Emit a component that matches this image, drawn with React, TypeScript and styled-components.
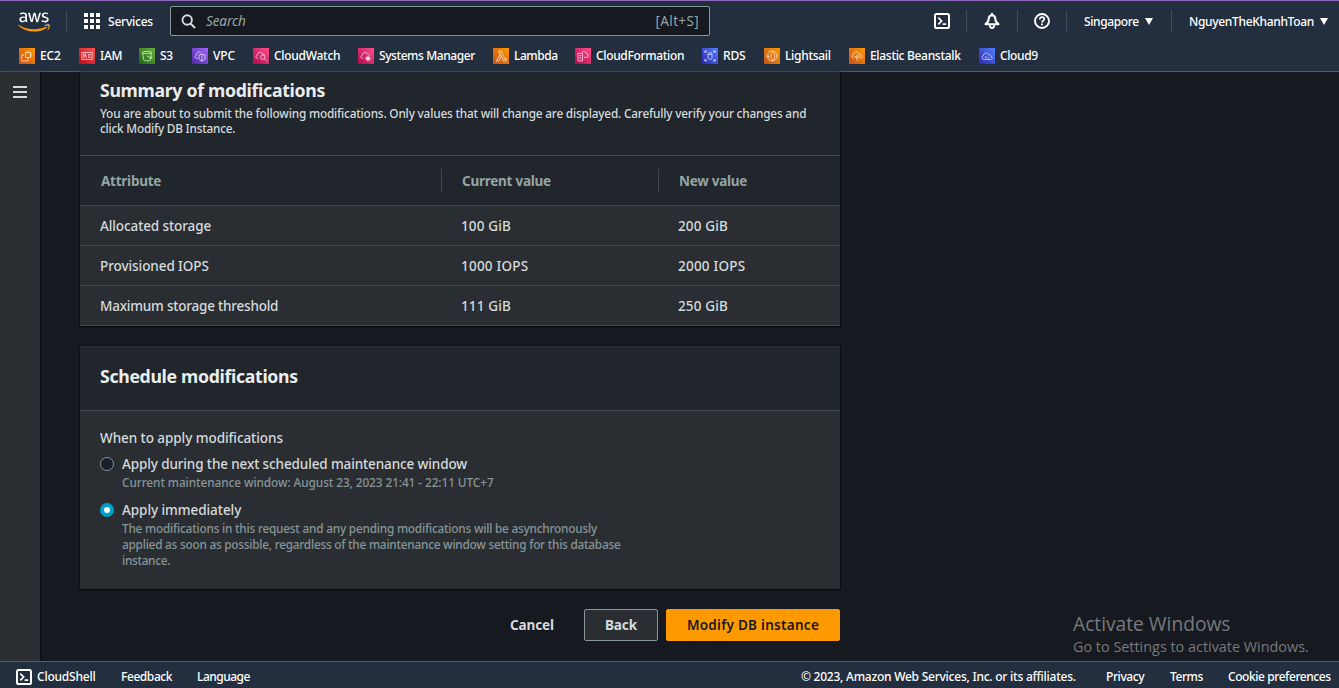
import React from 'react';
import styled, { createGlobalStyle } from 'styled-components';
import { FaAws } from 'react-icons/fa';

const GlobalStyle = createGlobalStyle`
  *, *::before, *::after { box-sizing: border-box; }
  body {
    margin: 0;
    background: #16191f;
    color: #d5dbdb;
    font-family: "Noto Sans", "Open Sans", sans-serif;
    font-size: 13.5px;
    font-weight: 500;
  }
  h2, p { margin: 0; }
`;

const Page = styled.div`
  position: relative;
  display: flex;
  flex-direction: column;
  height: 688px;
  overflow: hidden;
`;

/* ---------- header ---------- */

const Header = styled.header`
  flex: none;
  height: 72px;
  background: #232f3e;
  border-top: 1px solid #9069bd;
  border-bottom: 1px solid #545b64;
  color: #fff;
  font-size: 12px;
`;

const TopRow = styled.div`
  display: flex;
  align-items: center;
  height: 40px;
`;

const Logo = styled.span`
  display: flex;
  width: 48px;
  padding: 1px 0 0 18px;
  margin-right: 18px;
`;

const LogoMark = styled(FaAws)`
  flex: none;
  width: 32px;
  height: 26px;
  path { fill: url(#awsFill); }
`;

const GradientDefs = styled.svg`
  position: absolute;
  width: 0;
  height: 0;
`;

const Separator = styled.span`
  flex: none;
  width: 1px;
  height: 22px;
  background: #414d5c;
`;

const ServicesButton = styled.div`
  display: flex;
  align-items: center;
  gap: 8px;
  width: 103px;
  padding-left: 17px;
`;

const Text = styled.span<{ $track?: number }>`
  white-space: nowrap;
  letter-spacing: ${(p) => p.$track ?? 0}px;
`;

const IconLabel = styled(Text)`
  margin-top: -2px;
`;

const SearchBox = styled.div`
  display: flex;
  align-items: center;
  width: 540px;
  height: 30px;
  padding: 0 10px 0 10px;
  background: #16191f;
  border: 1px solid #879596;
  border-radius: 2px;
  color: #95a5a6;
  font-size: 13.5px;
  font-weight: 400;
`;

const Placeholder = styled(Text)`
  flex: 1;
  margin-left: 10px;
  font-style: italic;
`;

const Tools = styled.div`
  display: flex;
  align-items: center;
  margin-left: auto;
`;

const Tool = styled.div<{ $width: number }>`
  display: flex;
  align-items: center;
  justify-content: center;
  width: ${(p) => p.$width}px;
`;

const MenuTool = styled.div<{ $width: number; $end: number }>`
  display: flex;
  align-items: center;
  justify-content: space-between;
  width: ${(p) => p.$width}px;
  margin: 0 ${(p) => p.$end}px 0 17px;
`;

const Favorites = styled.nav`
  display: flex;
  height: 30px;
  padding: 7px 0 0 19px;
`;

const Favorite = styled.a<{ $width: number }>`
  display: flex;
  align-items: center;
  gap: 5px;
  width: ${(p) => p.$width}px;
  height: 16px;
  line-height: 15px;
`;

const Tile = styled.svg<{ $from: string; $to: string }>`
  flex: none;
  width: 16px;
  height: 16px;
  padding: 2px;
  background: linear-gradient(45deg, ${(p) => p.$from}, ${(p) => p.$to});
  fill: none;
  stroke: #fff;
  stroke-opacity: 0.8;
  stroke-width: 0.8;
`;

/* ---------- body ---------- */

const Body = styled.div`
  flex: 1;
  display: flex;
  min-height: 0;
`;

const Rail = styled.aside`
  display: flex;
  align-items: flex-start;
  width: 40px;
  padding: 14px 0 0 13px;
  background: #2a2e33;
  box-shadow: 1px 0 1px #0c0e12;
`;

const Content = styled.main`
  width: 760px;
  margin-left: 40px;
`;

const Card = styled.section`
  background: #2a2e33;
  box-shadow: 0 1px 1px #06080b, 1px 0 1px #0b0d11, -1px 0 1px #0f1216;
`;

const SummaryHead = styled.div`
  height: 84px;
  padding: 5px 20px 0;
  background: #21252c;
  border-bottom: 1px solid #414750;
`;

const Title = styled.h2<{ $track: number }>`
  font-size: 17.7px;
  line-height: 26px;
  font-weight: 700;
  color: #eaeded;
  letter-spacing: ${(p) => p.$track}px;
`;

const Intro = styled.p`
  margin-top: 3px;
  font-size: 11.8px;
  line-height: 15px;
`;

const Line = styled.span<{ $track: number }>`
  display: block;
  white-space: nowrap;
  letter-spacing: ${(p) => p.$track}px;
`;

const TableRow = styled.div`
  display: grid;
  grid-template-columns: 361px 217px 182px;
  align-items: center;
  height: 40px;
  border-bottom: 1px solid #414750;
`;

const TableHead = styled(TableRow)`
  height: 50px;
  background: #21252c;
  color: #95a5a6;
  font-weight: 700;
`;

const Cell = styled.span<{ $track: number }>`
  padding-left: 20px;
  white-space: nowrap;
  letter-spacing: ${(p) => p.$track}px;
`;

const HeadCell = styled(Cell)`
  height: 24px;
  line-height: 24px;
  border-left: 1px solid #414750;
  &:first-child { border-color: transparent; }
`;

const ScheduleCard = styled(Card)`
  height: 243px;
  margin-top: 20px;
  border-top: 1px solid #2b3036;
`;

const ScheduleHead = styled.div`
  height: 64px;
  padding: 16px 20px 0;
  background: #21252c;
  border-bottom: 1px solid #414d56;
`;

const Form = styled.div`
  padding: 17px 20px 0;
  line-height: 20px;
`;

const Option = styled.label<{ $top: number }>`
  display: grid;
  grid-template-columns: 14px 1fr;
  column-gap: 8px;
  margin-top: ${(p) => p.$top}px;
`;

const Radio = styled.span<{ $checked?: boolean }>`
  width: 14px;
  height: 14px;
  margin-top: 3px;
  border-radius: 50%;
  background: ${(p) => (p.$checked ? '#fff' : '#16202b')};
  border: ${(p) => (p.$checked ? '4px solid #00a1c9' : '1px solid #879596')};
`;

const Hint = styled.div`
  color: #879596;
  font-size: 11.8px;
  line-height: 16px;
`;

const Actions = styled.div`
  display: flex;
  justify-content: flex-end;
  gap: 8px;
  margin-top: 20px;
`;

const Button = styled.button<{ $kind: 'link' | 'normal' | 'primary'; $track: number; $width: number }>`
  width: ${(p) => p.$width}px;
  height: 32px;
  padding: 0;
  border: 1px solid ${(p) => ({ link: 'transparent', normal: '#879596', primary: '#ff9900' })[p.$kind]};
  border-radius: 2px;
  background: ${(p) => ({ link: 'transparent', normal: '#2a2e33', primary: '#ff9900' })[p.$kind]};
  color: ${(p) => (p.$kind === 'primary' ? '#16191f' : '#d5dbdb')};
  font: ${(p) => (p.$kind === 'primary' ? 600 : 700)} 13.5px "Noto Sans", sans-serif;
  letter-spacing: ${(p) => p.$track}px;
`;

const Watermark = styled.div`
  position: absolute;
  left: 1073px;
  top: 611px;
  color: #77797c;
  font-family: "Open Sans", sans-serif;
  font-weight: 400;
`;

const WatermarkTitle = styled.div`
  font-size: 19.2px;
  line-height: 26px;
`;

const WatermarkText = styled.div`
  font-size: 14.4px;
  line-height: 20px;
  white-space: nowrap;
`;

/* ---------- footer ---------- */

const Footer = styled.footer`
  flex: none;
  display: flex;
  align-items: center;
  height: 27px;
  padding: 4px 8px 0 16px;
  background: #232f3e;
  border-top: 1px solid #545b64;
  color: #fff;
  font-size: 12px;
  line-height: 15px;
`;

const FooterItem = styled.span<{ $width: number }>`
  display: flex;
  align-items: center;
  gap: 5px;
  flex: none;
  width: ${(p) => p.$width}px;
  height: 16px;
`;

const Spacer = styled.span`
  flex: 1;
`;

const ShellIcon = () => (
  <svg width="16" height="16" viewBox="0 0 16 16" fill="none" stroke="#fff" strokeWidth="2">
    <rect x="1" y="1" width="14" height="14" rx="1.6" />
    <path d="M4.3 4.6 7.6 8l-3.3 3.3M8.6 11.2h3.6" strokeWidth="1.7" />
  </svg>
);

const BellIcon = () => (
  <svg width="16" height="16" viewBox="0 0 16 16" fill="none" stroke="#fff" strokeWidth="2" strokeLinejoin="round">
    <path d="M8 0v2M8 2.200c-2 0-3.200 1.600-3.300 3.600 0 2.800-1.400 4.200-3.200 5.400h13c-1.800-1.200-3.200-2.600-3.200-5.400-.1-2-1.300-3.600-3.300-3.600z" />
    <path d="M5.800 12.200c.1 1.800 1 2.700 2.200 2.700s2.100-.9 2.200-2.700" />
  </svg>
);

const HelpIcon = () => (
  <svg width="16" height="16" viewBox="0 0 16 16" fill="none" stroke="#fff" strokeWidth="1.9">
    <circle cx="8" cy="8" r="7" />
    <path d="M5.700 6.500c0-1.500 1-2.300 2.300-2.300s2.300.8 2.300 2c0 1.400-2.300 1.700-2.300 3.200" strokeWidth="1.7" />
    <path d="M8 10.400v1.800" />
  </svg>
);

const Caret = () => (
  <svg width="8" height="7" viewBox="0 0 8 7">
    <path d="M0 0h8L4 7z" fill="#fff" />
  </svg>
);

const GridIcon = () => (
  <svg width="16" height="16" viewBox="0 0 16 16" fill="#fff">
    {[0, 6, 12].map((y) => [0, 6, 12].map((x) => <rect key={`${x}-${y}`} x={x} y={y} width="4" height="4" />))}
  </svg>
);

const SearchIcon = () => (
  <svg width="15" height="15" viewBox="0 0 15 15" fill="none" stroke="#d5dbdb" strokeWidth="1.9">
    <circle cx="6.200" cy="6" r="4.700" />
    <path d="M9.500 9.500 14 14" />
  </svg>
);

const cloud = 'M3.200 8.500H2.600C.5 8.300.4 5.400 2.400 5.200 2.300 2 6.500 1.400 7.300 4c1.300-.4 2 .4 2 1.500';

const favorites = [
  { name: 'EC2', width: 60, track: -0.2, from: '#c8511b', to: '#ff9900', d: 'M4.500 2.500h5v5h-5zM3.200 5H.8v6h6V8.800M7 1v1.500M11 4H9.500M11 6H9.500M7 9V7.500' },
  { name: 'IAM', width: 60, track: -0.3, from: '#bd0816', to: '#ff5252', d: 'M.8 2.500h10.400v7H.8zM2.500 4h2.500v1.500H2.500zM2.300 8.300v-1.500h3v1.500M7 4.500h2.500M7 6h2.500M7 7.700h2.500' },
  { name: 'S3', width: 53, track: -0.3, from: '#1b660f', to: '#6cae3e', d: 'M1.500 2.500c0-1.400 9-1.400 9 0s-9 1.400-9 0l1.200 7.500c.3 1.200 6.300 1.200 6.600 0l1.200-7.500M6 6l4 2c1.500.5 1.500-.6.3-1.200' },
  { name: 'VPC', width: 61, track: -0.1, from: '#4d27a8', to: '#a166ff', d: 'M4 8.500H2.600C.5 8.300.4 5.400 2.400 5.200 2.300 2 5.500.9 7 3M8 4l3 1v3c0 1.500-1.500 2.500-3 3-1.500-.5-3-1.500-3-3V5zM8 4v7' },
  { name: 'CloudWatch', width: 105, track: -0.28, from: '#b0084d', to: '#ff4f8b', d: cloud + 'M10 7.200a2.200 2.200 0 1 1-4.400 0 2.200 2.200 0 1 1 4.400 0M9.500 8.800l2 2' },
  { name: 'Systems Manager', width: 135, track: -0.43, from: '#b0084d', to: '#ff4f8b', d: cloud + 'M9.700 8.500a1.700 1.700 0 1 1-3.400 0 1.700 1.700 0 1 1 3.400 0M8 5.800v5.400M5.300 8.500h5.400M6.200 6.700l3.600 3.600M9.800 6.700 6.200 10.300' },
  { name: 'Lambda', width: 82, track: -0.45, from: '#c8511b', to: '#ff9900', d: 'M4 1h2.300l3.500 8 1.200-.4.500 1.700-2.800.9L5.500 4.500M4 1v1.800h1L5.300 4 1.500 11h2.300l2.500-5' },
  { name: 'CloudFormation', width: 127, track: -0.34, from: '#b0084d', to: '#ff4f8b', d: 'M1 3.500h4.500v7.500H1zM2.300 5.500h2M2.300 7.300h2M2.300 9h2M5 2.800c.5-2 3-2 3.600 0 1.200-.3 1.600.7 1.500 1.500 1.800.2 1.500 3-.1 3H7' },
  { name: 'RDS', width: 62, track: -0.2, from: '#2e27ad', to: '#527fff', d: 'M4 3.500c0-1 4-1 4 0v5c0 1-4 1-4 0zM4 3.800c0 1 4 1 4 0M.8 3V1H3M.9 1l1.700 1.700M9 1h2.200v2M11 1 9.400 2.700M.8 9v2H3M.9 11l1.700-1.700M9 11h2.200V9M11 11 9.400 9.300' },
  { name: 'Lightsail', width: 85, track: -0.3, from: '#c8511b', to: '#ff9900', d: 'M2 3a5 5 0 1 1 .5 6.500M6.500 1.500c3 2.500 3 6.500 0 9-1.800-2.500-1.800-6.500 0-9M0 5h3.500M.5 6.500h3M1 8h2.500' },
  { name: 'Elastic Beanstalk', width: 130, track: -0.31, from: '#c8511b', to: '#ff9900', d: 'M3 8H2.500C.3 7.800.3 5 2.300 4.800 2.300 1.500 6.500.8 7.500 3.500c2-.5 2.300 1 2.300 1.800 2 .3 1.700 2.700-.3 2.700H8.300M6 11V4.500M4 8V6.200L6 8M8 7.500V5.500L6 7' },
  { name: 'Cloud9', width: 80, track: -0.38, from: '#2e27ad', to: '#527fff', d: 'M3 9.500C.3 9.400.3 6.300 2.300 6 2.300 2.700 6.500 2 7.500 4.700c2-.5 2.300 1 2.300 1.800 2 .3 1.700 3-.3 3zM4 6.500l1.500.8L4 8M6.200 8h1.800' },
];

const rows = [
  { name: 'Allocated storage', current: '100 GiB', next: '200 GiB', tracks: [-0.1, 0.14] },
  { name: 'Provisioned IOPS', current: '1000 IOPS', next: '2000 IOPS', tracks: [-0.07, 0.22] },
  { name: 'Maximum storage threshold', current: '111 GiB', next: '250 GiB', tracks: [-0.21, 0.14] },
];

export default function App() {
  return (
    <Page>
      <GlobalStyle />
      <Header>
        <TopRow>
          <Logo>
            <GradientDefs>
              <linearGradient id="awsFill" gradientUnits="userSpaceOnUse" x1="0" y1="0" x2="0" y2="512">
                <stop offset="0.61" stopColor="#fff" />
                <stop offset="0.61" stopColor="#ff9900" />
              </linearGradient>
            </GradientDefs>
            <LogoMark />
          </Logo>
          <Separator />
          <ServicesButton>
            <GridIcon />
            <Text $track={-0.22}>Services</Text>
          </ServicesButton>
          <SearchBox>
            <SearchIcon />
            <Placeholder $track={-0.1}>Search</Placeholder>
            <Text $track={0.35}>[Alt+S]</Text>
          </SearchBox>
          <Tools>
            <Tool $width={48}><ShellIcon /></Tool>
            <Separator />
            <Tool $width={50}><BellIcon /></Tool>
            <Separator />
            <Tool $width={48}><HelpIcon /></Tool>
            <Separator />
            <MenuTool $width={69} $end={18}>
              <Text $track={-0.38}>Singapore</Text>
              <Caret />
            </MenuTool>
            <Separator />
            <MenuTool $width={139} $end={11}>
              <Text $track={-0.33}>NguyenTheKhanhToan</Text>
              <Caret />
            </MenuTool>
          </Tools>
        </TopRow>
        <Favorites>
          {favorites.map((f) => (
            <Favorite key={f.name} $width={f.width}>
              <Tile viewBox="0 0 12 12" $from={f.from} $to={f.to}><path d={f.d} /></Tile>
              <IconLabel $track={f.track}>{f.name}</IconLabel>
            </Favorite>
          ))}
        </Favorites>
      </Header>

      <Body>
        <Rail>
          <svg width="14" height="12" viewBox="0 0 14 12" fill="#d5dbdb">
            <path d="M0 0h14v2H0zM0 5h14v2H0zM0 10h14v2H0z" />
          </svg>
        </Rail>
        <Content>
          <Card>
            <SummaryHead>
              <Title $track={-0.31}>Summary of modifications</Title>
              <Intro>
                <Line $track={-0.18}>You are about to submit the following modifications. Only values that will change are displayed. Carefully verify your changes and</Line>
                <Line $track={-0.22}>click Modify DB Instance.</Line>
              </Intro>
            </SummaryHead>
            <TableHead>
              <HeadCell $track={-0.25}>Attribute</HeadCell>
              <HeadCell $track={-0.25}>Current value</HeadCell>
              <HeadCell $track={-0.28}>New value</HeadCell>
            </TableHead>
            {rows.map((r) => (
              <TableRow key={r.name}>
                <Cell $track={r.tracks[0]}>{r.name}</Cell>
                <Cell $track={r.tracks[1]}>{r.current}</Cell>
                <Cell $track={r.tracks[1]}>{r.next}</Cell>
              </TableRow>
            ))}
          </Card>

          <ScheduleCard>
            <ScheduleHead>
              <Title $track={-0.33}>Schedule modifications</Title>
            </ScheduleHead>
            <Form>
              <Text $track={-0.06}>When to apply modifications</Text>
              <Option $top={6}>
                <Radio />
                <div>
                  <Text $track={-0.12}>Apply during the next scheduled maintenance window</Text>
                  <Hint><Line $track={-0.07}>Current maintenance window: August 23, 2023 21:41 - 22:11 UTC+7</Line></Hint>
                </div>
              </Option>
              <Option $top={10}>
                <Radio $checked />
                <div>
                  <Text $track={-0.06}>Apply immediately</Text>
                  <Hint>
                    <Line $track={-0.21}>The modifications in this request and any pending modifications will be asynchronously</Line>
                    <Line $track={-0.23}>applied as soon as possible, regardless of the maintenance window setting for this database</Line>
                    <Line $track={-0.3}>instance.</Line>
                  </Hint>
                </div>
              </Option>
            </Form>
          </ScheduleCard>

          <Actions>
            <Button $kind="link" $track={-0.08} $width={88}>Cancel</Button>
            <Button $kind="normal" $track={-0.08} $width={74}>Back</Button>
            <Button $kind="primary" $track={0.28} $width={174}>Modify DB instance</Button>
          </Actions>
        </Content>
      </Body>

      <Watermark>
        <WatermarkTitle>Activate Windows</WatermarkTitle>
        <WatermarkText>Go to Settings to activate Windows.</WatermarkText>
      </Watermark>

      <Footer>
        <FooterItem $width={105}><ShellIcon /><IconLabel $track={-0.22}>CloudShell</IconLabel></FooterItem>
        <FooterItem $width={76}><IconLabel $track={-0.42}>Feedback</IconLabel></FooterItem>
        <FooterItem $width={60}><IconLabel $track={-0.5}>Language</IconLabel></FooterItem>
        <Spacer />
        <FooterItem $width={305}><IconLabel $track={-0.24}>© 2023, Amazon Web Services, Inc. or its affiliates.</IconLabel></FooterItem>
        <FooterItem $width={64}><IconLabel $track={-0.4}>Privacy</IconLabel></FooterItem>
        <FooterItem $width={58}><IconLabel $track={-0.45}>Terms</IconLabel></FooterItem>
        <FooterItem $width={103}><IconLabel $track={-0.43}>Cookie preferences</IconLabel></FooterItem>
      </Footer>
    </Page>
  );
}
